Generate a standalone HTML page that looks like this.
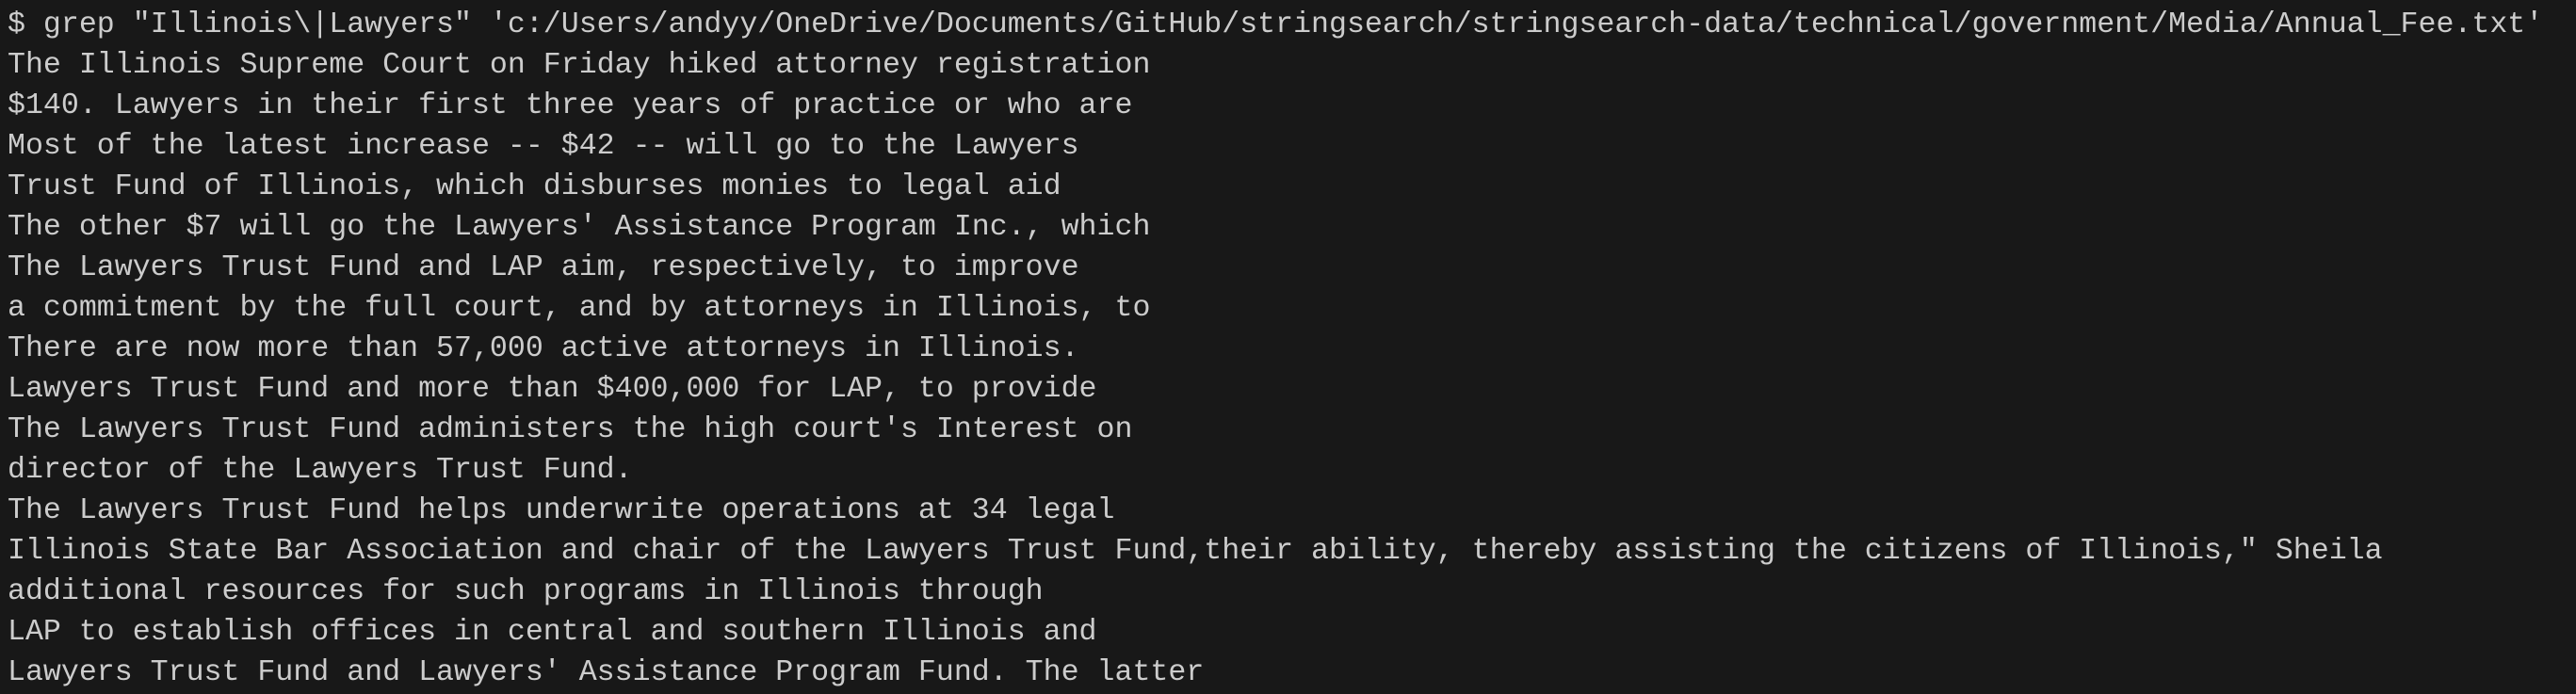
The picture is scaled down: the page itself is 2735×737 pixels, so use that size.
<!DOCTYPE html>
<html><head><meta charset="utf-8"><style>
html,body{margin:0;padding:0;background:#181818;width:2735px;height:737px;overflow:hidden}
pre{margin:0;padding:5px 0 0 8px;font-family:"Liberation Mono",monospace;font-size:31.6px;line-height:43px;color:#cccccc;white-space:pre}
</style></head><body><pre>$ grep "Illinois\|Lawyers" 'c:/Users/andyy/OneDrive/Documents/GitHub/stringsearch/stringsearch-data/technical/government/Media/Annual_Fee.txt'
The Illinois Supreme Court on Friday hiked attorney registration
$140. Lawyers in their first three years of practice or who are
Most of the latest increase -- $42 -- will go to the Lawyers
Trust Fund of Illinois, which disburses monies to legal aid
The other $7 will go the Lawyers' Assistance Program Inc., which
The Lawyers Trust Fund and LAP aim, respectively, to improve
a commitment by the full court, and by attorneys in Illinois, to
There are now more than 57,000 active attorneys in Illinois.
Lawyers Trust Fund and more than $400,000 for LAP, to provide
The Lawyers Trust Fund administers the high court's Interest on
director of the Lawyers Trust Fund.
The Lawyers Trust Fund helps underwrite operations at 34 legal
Illinois State Bar Association and chair of the Lawyers Trust Fund,their ability, thereby assisting the citizens of Illinois," Sheila
additional resources for such programs in Illinois through
LAP to establish offices in central and southern Illinois and
Lawyers Trust Fund and Lawyers' Assistance Program Fund. The latter</pre></body></html>
